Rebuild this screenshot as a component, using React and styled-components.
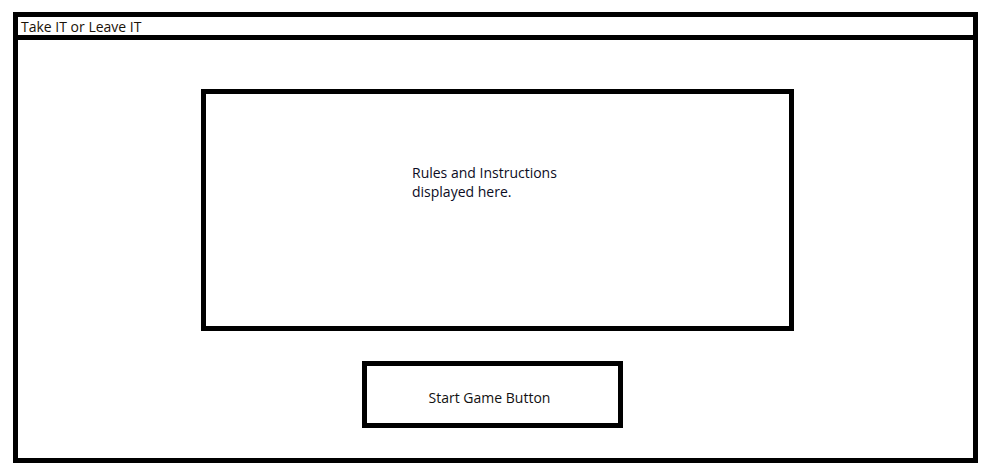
import styled, { createGlobalStyle } from "styled-components";

const GlobalStyle = createGlobalStyle`
  html, body {
    margin: 0;
    padding: 0;
    background: #ffffff;
  }

  body {
    font-family: "Open Sans", "Noto Sans", sans-serif;
    color: #000000;
  }
`;

const Page = styled.div`
  padding: 12px 0 0 13px;
`;

const Frame = styled.div`
  width: 955px;
  height: 441px;
  border: 5px solid #000;
  display: flex;
  flex-direction: column;
`;

const TitleBar = styled.div`
  height: 18px;
  border-bottom: 5px solid #000;
  padding-left: 3px;
  font-size: 14px;
  line-height: 19px;
  color: #1a1208;
`;

const Content = styled.div`
  flex: 1;
  display: flex;
  flex-direction: column;
  align-items: flex-start;
  padding-top: 49px;
`;

const RulesBox = styled.div`
  box-sizing: border-box;
  margin-left: 183px;
  width: 593px;
  height: 242px;
  border: 5px solid #000;
  padding: 69px 0 0 206px;
  font-size: 14px;
  line-height: 19px;
  color: #0c0c24;
`;

const StartButton = styled.button`
  margin-left: 344px;
  margin-top: 30px;
  width: 261px;
  height: 67px;
  border: 5px solid #000;
  background: #fff;
  font-family: inherit;
  font-size: 14px;
  color: #111;
  padding: 5px 6px 0 0;
  cursor: pointer;
`;

const App = () => {
  return (
    <>
      <GlobalStyle />
      <Page>
        <Frame>
          <TitleBar>Take IT or Leave IT</TitleBar>
          <Content>
            <RulesBox>
              Rules and Instructions
              <br />
              displayed here.
            </RulesBox>
            <StartButton>Start Game Button</StartButton>
          </Content>
        </Frame>
      </Page>
    </>
  );
};

export default App;
